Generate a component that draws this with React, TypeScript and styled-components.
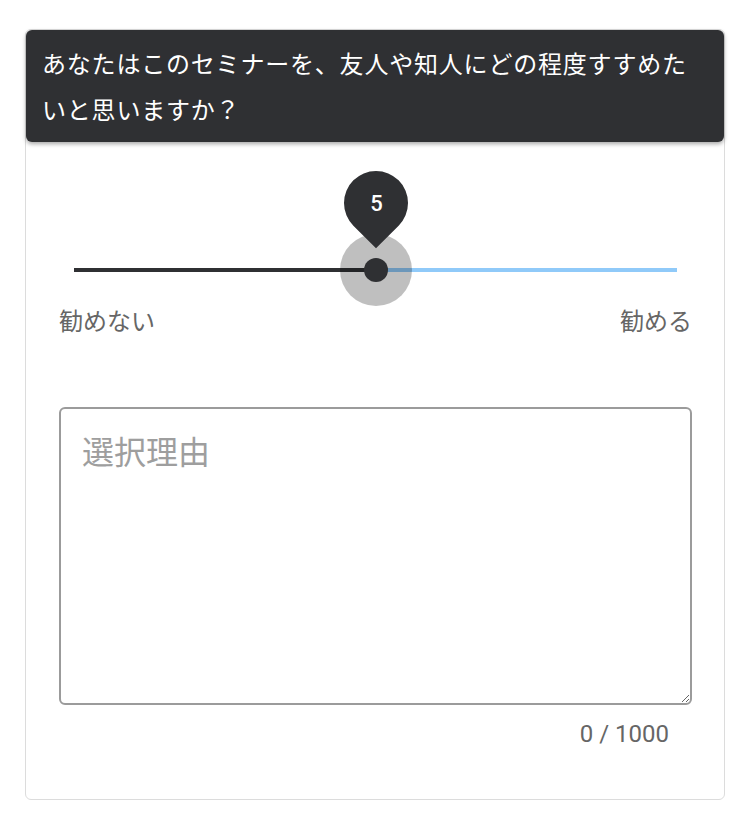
import React from 'react'
import styled, { createGlobalStyle } from 'styled-components'

const GlobalStyle = createGlobalStyle`
  body {
    margin: 0;
    background: #fff;
    font-family: "Noto Sans CJK JP", "Noto Sans", sans-serif;
  }
`

const Page = styled.div`
  padding: 29px 25px;
`

const Card = styled.section`
  width: 698px;
  border: 1px solid #dcdcdc;
  border-radius: 6px;
  background: #fff;
`

const Question = styled.h2`
  margin: 0;
  padding: 10px 16px;
  background: #2f3033;
  color: #fff;
  border-radius: 6px;
  box-shadow: 0 2px 4px rgba(0, 0, 0, 0.35);
  font-size: 24px;
  font-weight: 400;
  line-height: 46px;
  letter-spacing: 0.8px;
`

const Body = styled.div`
  padding: 0 32px 48px 33px;
`

const SliderWrap = styled.div`
  position: relative;
  display: flex;
  align-items: center;
  height: 72px;
  margin: 92px 15px 0;
`

const Rail = styled.div<{ $grow: number; $color: string }>`
  flex: ${(p) => p.$grow} 1 0;
  height: 4px;
  background: ${(p) => p.$color};
`

const Knob = styled.div`
  position: absolute;
  top: 0;
  width: 72px;
  height: 72px;
  margin-left: -36px;
  display: flex;
  align-items: center;
  justify-content: center;
  border-radius: 50%;
  background: rgba(0, 0, 0, 0.25);
`

const Thumb = styled.div`
  width: 24px;
  height: 24px;
  border-radius: 50%;
  background: #2f3033;
`

const Bubble = styled.div`
  position: absolute;
  top: -63px;
  left: 4px;
  width: 64px;
  height: 64px;
  display: flex;
  align-items: center;
  justify-content: center;
  border-radius: 50% 50% 50% 0;
  background: #2f3033;
  transform: rotate(-45deg);
`

const BubbleText = styled.span`
  transform: rotate(45deg);
  color: #fff;
  font-family: Roboto, "Noto Sans", sans-serif;
  font-size: 22px;
  font-weight: 500;
`

const Ends = styled.div`
  display: flex;
  justify-content: space-between;
  margin-top: -2px;
  color: #666;
  font-size: 24px;
  line-height: 32px;
`

const Reason = styled.textarea`
  display: block;
  box-sizing: border-box;
  width: 100%;
  height: 298px;
  margin-top: 71px;
  padding: 17px 21px;
  border: 2px solid #9b9b9b;
  border-radius: 6px;
  font-family: "Noto Sans CJK JP", "Noto Sans", sans-serif;
  font-size: 32px;
  line-height: 1.5;
  color: #333;
  outline: none;

  &::placeholder {
    color: #9e9e9e;
  }
`

const Counter = styled.div`
  margin-top: 12px;
  padding-right: 23px;
  text-align: right;
  color: #666;
  font-family: Roboto, "Noto Sans", sans-serif;
  font-size: 24px;
  line-height: 34px;
`

const value = 5
const max = 10

export default function App() {
  const pct = (value / max) * 100
  return (
    <Page>
      <GlobalStyle />
      <Card>
        <Question>あなたはこのセミナーを、友人や知人にどの程度すすめたいと思いますか？</Question>
        <Body>
          <SliderWrap>
            <Rail $grow={value} $color="#2f3033" />
            <Rail $grow={max - value} $color="#90caf9" />
            <Knob style={{ left: `${pct}%` }}>
              <Thumb />
              <Bubble>
                <BubbleText>{value}</BubbleText>
              </Bubble>
            </Knob>
          </SliderWrap>
          <Ends>
            <span>勧めない</span>
            <span>勧める</span>
          </Ends>
          <Reason placeholder="選択理由" />
          <Counter>0 / 1000</Counter>
        </Body>
      </Card>
    </Page>
  )
}
